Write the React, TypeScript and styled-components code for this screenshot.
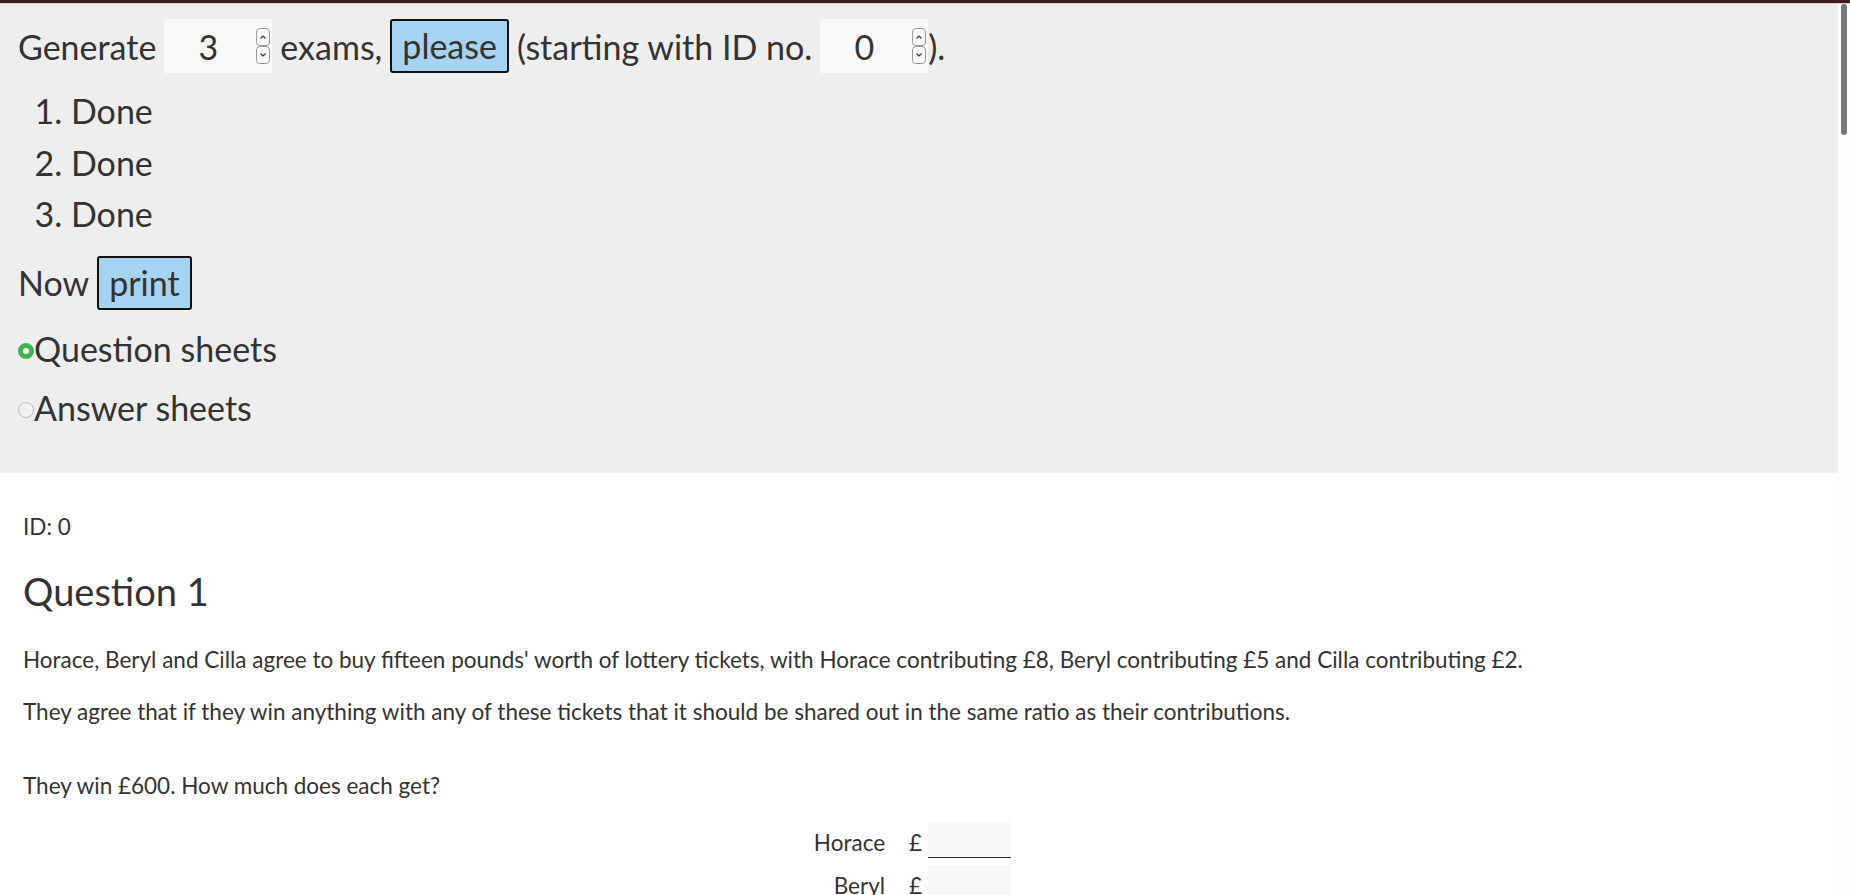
import React from 'react';
import styled, { createGlobalStyle } from 'styled-components';

const GlobalStyle = createGlobalStyle`
    html, body {
        margin: 0;
        padding: 0;
        height: 100%;
        overflow: hidden;
        background: #ffffff;
    }
    body {
        font-family: 'Lato', 'Source Sans Pro', sans-serif;
        color: #333333;
    }
`;

const Frame = styled.div`
    display: flex;
    flex-direction: column;
    height: 895px;
`;

const TopEdge = styled.div`
    height: 3px;
    background: #3f1d1d;
    border-bottom: 1px solid #cfcfcf;
`;

const Body = styled.div`
    display: flex;
    flex: 1;
    min-height: 0;
`;

const Main = styled.main`
    flex: 1;
    min-width: 0;
`;

const ScrollTrack = styled.div`
    width: 12px;
    background: #fdfdfd;
    padding: 0 3px 0 3px;
    box-sizing: border-box;
`;

const ScrollThumb = styled.div`
    height: 131px;
    background: #787878;
    border-radius: 3px;
`;

const Controls = styled.section`
    background: #eeeeee;
    padding: 15px 18px 40px 18px;
    font-size: 34px;
`;

const Row = styled.div<{ $top?: number }>`
    display: flex;
    align-items: center;
    gap: 8px;
    height: 54px;
    margin-top: ${props => props.$top ?? 0}px;
    white-space: nowrap;
`;

const Group = styled.span`
    display: inline-flex;
    align-items: center;
`;

const NumberBox = styled.span`
    display: inline-flex;
    align-items: center;
    width: 108px;
    height: 54px;
    background: #f9f9f9;
    box-sizing: border-box;
    padding-right: 2px;
`;

const NumberValue = styled.input`
    flex: 1;
    min-width: 0;
    border: none;
    background: transparent;
    font: inherit;
    color: inherit;
    text-align: center;
    padding: 0 4px 0 0;
    outline: none;
`;

const Spinner = styled.svg`
    width: 14px;
    height: 36px;
    flex: none;
`;

const ActionButton = styled.button`
    font: inherit;
    color: #333333;
    background: #a5d3f1;
    border: 2px solid #111111;
    border-radius: 3px;
    height: 54px;
    padding: 0 10px;
    line-height: 1;
    cursor: pointer;
`;

const DoneList = styled.ol`
    margin: 12px 0 0 0;
    padding-left: 53px;
    line-height: 51.5px;
`;

const RadioRow = styled.label<{ $top: number }>`
    display: flex;
    align-items: center;
    height: 50px;
    margin-top: ${props => props.$top}px;
`;

const RadioDot = styled.span<{ $on?: boolean }>`
    width: 16px;
    height: 16px;
    box-sizing: border-box;
    border-radius: 50%;
    margin-top: 4px;
    flex: none;
    background: ${props => (props.$on ? '#ffffff' : '#f2f2f2')};
    border: ${props => (props.$on ? '5px solid #3fb34f' : '1px solid #b9b9b9')};
`;

const Sheet = styled.section`
    padding: 36px 23px 0 23px;
    font-size: 22.5px;
`;

const IdLine = styled.div`
    line-height: 36px;
`;

const QuestionTitle = styled.h2`
    margin: 21px 0 0 0;
    font-size: 38px;
    font-weight: 400;
    line-height: 50px;
`;

const Para = styled.p<{ $top: number }>`
    margin: ${props => props.$top}px 0 0 0;
    line-height: 36px;
`;

const AnswerArea = styled.div`
    padding-right: 12px;
    margin-top: 17px;
`;

const AnswerTable = styled.table`
    margin: 0 auto;
    border-collapse: collapse;
`;

const Label = styled.td`
    text-align: right;
    padding: 0 24px 0 0;
    height: 41px;
`;

const Pound = styled.td`
    padding: 0 5px 0 0;
`;

const Blank = styled.input<{ $line?: boolean }>`
    display: block;
    width: 83px;
    height: 36px;
    box-sizing: border-box;
    border: none;
    border-bottom: 1px solid ${props => (props.$line ? '#333333' : '#f7f7f7')};
    background: #f7f7f7;
    font: inherit;
    margin-bottom: 5px;
`;

const SpinIcon = () => (
    <Spinner viewBox="0 0 14 36">
        <rect x="0.5" y="0.5" width="13" height="17" rx="3.5" fill="#fbfbfb" stroke="#9a9a9a" />
        <rect x="0.5" y="18.5" width="13" height="17" rx="3.5" fill="#fbfbfb" stroke="#9a9a9a" />
        <path d="M4.5 10.5 L7 8 L9.5 10.5" fill="none" stroke="#333" strokeWidth="1.2" />
        <path d="M4.5 25.5 L7 28 L9.5 25.5" fill="none" stroke="#333" strokeWidth="1.2" />
    </Spinner>
);

const NumberField = ({ value }: { value: number }) => (
    <NumberBox>
        <NumberValue defaultValue={value} />
        <SpinIcon />
    </NumberBox>
);

const people = ['Horace', 'Beryl', 'Cilla'];

const App = () => {
    return (
        <Frame>
            <GlobalStyle />
            <TopEdge />
            <Body>
                <Main>
                    <Controls>
                        <Row>
                            <span>Generate</span>
                            <NumberField value={3} />
                            <span>exams,</span>
                            <ActionButton>please</ActionButton>
                            <span>(starting with ID no.</span>
                            <Group>
                                <NumberField value={0} />
                                <span>).</span>
                            </Group>
                        </Row>
                        <DoneList>
                            <li>Done</li>
                            <li>Done</li>
                            <li>Done</li>
                        </DoneList>
                        <Row $top={16}>
                            <span>Now</span>
                            <ActionButton>print</ActionButton>
                        </Row>
                        <RadioRow $top={14}>
                            <RadioDot $on />
                            <span>Question sheets</span>
                        </RadioRow>
                        <RadioRow $top={9}>
                            <RadioDot />
                            <span>Answer sheets</span>
                        </RadioRow>
                    </Controls>
                    <Sheet>
                        <IdLine>ID: 0</IdLine>
                        <QuestionTitle>Question 1</QuestionTitle>
                        <Para $top={26}>
                            Horace, Beryl and Cilla agree to buy fifteen pounds' worth of lottery tickets, with Horace contributing £8, Beryl contributing £5 and Cilla contributing £2.
                        </Para>
                        <Para $top={16}>
                            They agree that if they win anything with any of these tickets that it should be shared out in the same ratio as their contributions.
                        </Para>
                        <Para $top={38}>They win £600. How much does each get?</Para>
                        <AnswerArea>
                            <AnswerTable>
                                <tbody>
                                    {people.map((name, i) => (
                                        <tr key={name}>
                                            <Label>{name}</Label>
                                            <Pound>£</Pound>
                                            <td>
                                                <Blank $line={i === 0} />
                                            </td>
                                        </tr>
                                    ))}
                                </tbody>
                            </AnswerTable>
                        </AnswerArea>
                    </Sheet>
                </Main>
                <ScrollTrack>
                    <ScrollThumb />
                </ScrollTrack>
            </Body>
        </Frame>
    );
};

export default App;
